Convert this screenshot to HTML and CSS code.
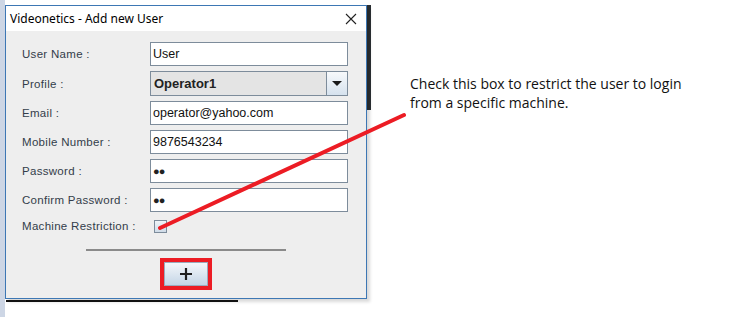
FILE: index.html
```html
<!DOCTYPE html>
<html lang="en">
<head>
    <meta charset="UTF-8">
    <title>Videonetics - Add new User</title>
    <link rel="stylesheet" href="styles.css">
</head>
<body>
    <div class="desk">
        <div class="side"></div>
        <div class="dialog">
            <div class="titlebar">
                <span class="title">Videonetics - Add new User</span>
                <svg class="close" width="12" height="12" viewBox="0 0 12 12">
                    <path d="M1 1 L11 11 M11 1 L1 11" stroke="#222" stroke-width="1.1" fill="none"/>
                </svg>
            </div>
            <div class="content">
                <div class="form">
                    <label>User Name :</label>
                    <div class="field">User</div>
                    <label>Profile :</label>
                    <div class="combo">
                        <span class="combo-value">Operator1</span>
                        <span class="combo-btn"><i class="arrow"></i></span>
                    </div>
                    <label>Email :</label>
                    <div class="field">operator@yahoo.com</div>
                    <label>Mobile Number :</label>
                    <div class="field">9876543234</div>
                    <label>Password :</label>
                    <div class="field dots">&#9679;&#9679;</div>
                    <label>Confirm Password :</label>
                    <div class="field dots">&#9679;&#9679;</div>
                    <label>Machine Restriction :</label>
                    <div class="check-cell"><span class="checkbox"></span></div>
                </div>
                <div class="sep"></div>
                <div class="actions">
                    <div class="mark">
                        <button class="add">
                            <svg width="14" height="14" viewBox="0 0 14 14">
                                <path d="M7 1 V13 M1 7 H13" stroke="#1e1e1e" stroke-width="2.2" fill="none"/>
                            </svg>
                        </button>
                    </div>
                </div>
            </div>
            <div class="underbar"></div>
        </div>
        <div class="behind"></div>
        <p class="note">Check this box to restrict the user to login<br>from a specific machine.</p>
        <svg class="pointer" width="731" height="317" viewBox="0 0 731 317">
            <line x1="160" y1="228" x2="404" y2="115" stroke="#ec1c24" stroke-width="4" stroke-linecap="round"/>
        </svg>
    </div>
</body>
</html>
```

FILE: styles.css
```css
body {
    margin: 0;
    background: #ffffff;
    font-family: "Liberation Sans", Arial, sans-serif;
}

.desk {
    position: relative;
    width: 731px;
    height: 317px;
    display: flex;
    align-items: flex-start;
}

.side {
    width: 5px;
    height: 317px;
    background: #cdd6e5;
}

.dialog {
    margin-top: 5px;
    width: 360px;
    height: 292px;
    border: 1px solid #3d77b4;
    background: #eeeeee;
    box-shadow: 3px 3px 3px rgba(0, 0, 0, 0.15);
    display: flex;
    flex-direction: column;
    position: relative;
}

.underbar {
    position: absolute;
    left: 0;
    top: 294px;
    width: 232px;
    height: 2px;
    background: #111;
}

.titlebar {
    height: 25px;
    background: #ffffff;
    display: flex;
    align-items: center;
    justify-content: space-between;
    padding: 0 9px 0 4px;
}

.title {
    font-family: "Noto Sans", sans-serif;
    font-size: 12px;
    color: #000;
}

.content {
    padding: 11px 0 0 16px;
}

.form {
    display: grid;
    grid-template-columns: 128px 198px;
    row-gap: 5px;
    align-items: center;
}

.form label {
    font-size: 11.5px;
    letter-spacing: 0.3px;
    color: #333d4a;
}

.field {
    height: 22px;
    border: 1px solid #7d8c9b;
    background: #fff;
    font-size: 12.5px;
    line-height: 22px;
    padding-left: 2px;
    color: #111;
}

.dots {
    font-size: 11px;
    letter-spacing: -1px;
    color: #222;
}

.combo {
    height: 23px;
    border: 1px solid #7d8c9b;
    background: #e4e4e4;
    display: flex;
}

.combo-value {
    flex: 1;
    font-weight: bold;
    font-size: 13px;
    line-height: 23px;
    padding-left: 3px;
    color: #222;
}

.combo-btn {
    width: 20px;
    border-left: 1px solid #7d8c9b;
    background: linear-gradient(#f7f9fb, #d6e2ee);
    display: flex;
    align-items: center;
    justify-content: center;
}

.arrow {
    width: 0;
    height: 0;
    border-left: 5px solid transparent;
    border-right: 5px solid transparent;
    border-top: 5px solid #1a1a1a;
}

.check-cell {
    height: 18px;
    display: flex;
    align-items: center;
    padding-left: 4px;
}

.checkbox {
    width: 11px;
    height: 11px;
    border: 1px solid #7d8c9b;
    background: linear-gradient(#f0f4f8, #cfdbe7);
}

.sep {
    width: 200px;
    height: 2px;
    background: #8a8a8a;
    margin: 14px 0 0 64px;
}

.actions {
    display: flex;
    padding: 7px 0 0 138px;
}

.mark {
    border: 4px solid #ec1c24;
    background: #ec1c24;
    display: flex;
}

.add {
    width: 44px;
    height: 24px;
    border: 1px solid #9aabbd;
    background: linear-gradient(#f4f7fa, #c4d5e6);
    display: flex;
    align-items: center;
    justify-content: center;
    padding: 0;
}

.behind {
    margin-top: 5px;
    width: 4px;
    height: 105px;
    background: #2b2f33;
}

.note {
    margin: 74px 0 0 39px;
    font-family: "Open Sans", sans-serif;
    font-size: 14px;
    line-height: 19px;
    color: #111;
}

.pointer {
    position: absolute;
    left: 0;
    top: 0;
    pointer-events: none;
}
```
